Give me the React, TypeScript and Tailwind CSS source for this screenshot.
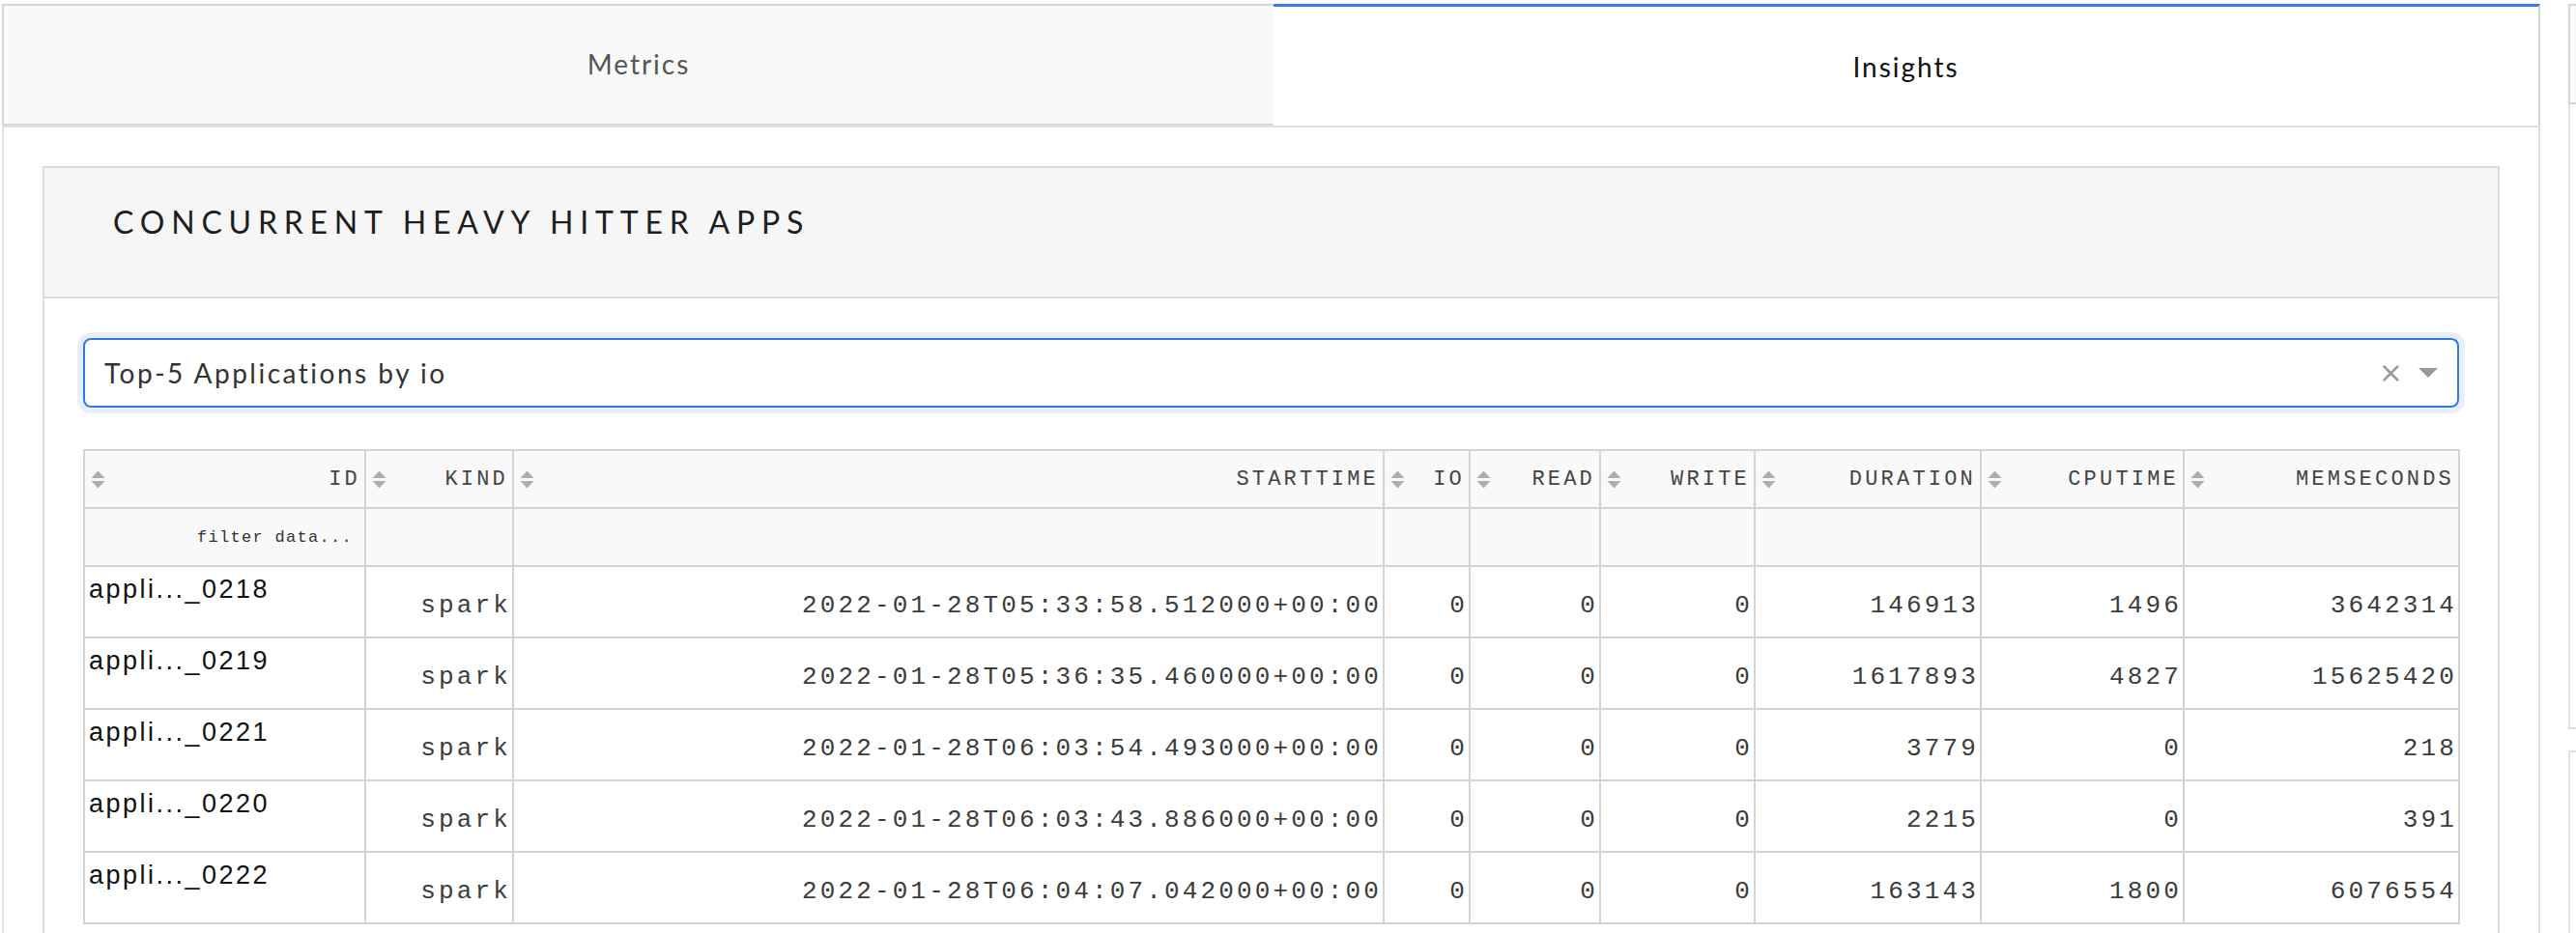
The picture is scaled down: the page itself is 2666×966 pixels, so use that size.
import React from "react";

const rows = [
  { id: "appli..._0218", kind: "spark", start: "2022-01-28T05:33:58.512000+00:00", io: 0, read: 0, write: 0, duration: 146913, cpu: 1496, mem: 3642314 },
  { id: "appli..._0219", kind: "spark", start: "2022-01-28T05:36:35.460000+00:00", io: 0, read: 0, write: 0, duration: 1617893, cpu: 4827, mem: 15625420 },
  { id: "appli..._0221", kind: "spark", start: "2022-01-28T06:03:54.493000+00:00", io: 0, read: 0, write: 0, duration: 3779, cpu: 0, mem: 218 },
  { id: "appli..._0220", kind: "spark", start: "2022-01-28T06:03:43.886000+00:00", io: 0, read: 0, write: 0, duration: 2215, cpu: 0, mem: 391 },
  { id: "appli..._0222", kind: "spark", start: "2022-01-28T06:04:07.042000+00:00", io: 0, read: 0, write: 0, duration: 163143, cpu: 1800, mem: 6076554 },
];

const columns = [
  { key: "id", label: "ID", width: 291 },
  { key: "kind", label: "KIND", width: 153 },
  { key: "start", label: "STARTTIME", width: 901 },
  { key: "io", label: "IO", width: 89 },
  { key: "read", label: "READ", width: 135 },
  { key: "write", label: "WRITE", width: 160 },
  { key: "duration", label: "DURATION", width: 234 },
  { key: "cpu", label: "CPUTIME", width: 210 },
  { key: "mem", label: "MEMSECONDS", width: 285 },
];

const SortIcon = () => (
  <svg width="15" height="19" viewBox="0 0 15 19" className="shrink-0">
    <path d="M0.5 8 L7.5 0.5 L14.5 8 Z" fill="#adadad" />
    <path d="M0.5 11 L7.5 18.5 L14.5 11 Z" fill="#adadad" />
  </svg>
);

const HeavyHitters = () => {
  return (
    <div className="border-2 border-[#dcdcdc] border-b-0 ml-[40px] mr-[40px] mt-[40px] flex-1">
      <div className="h-[135px] bg-[#f6f6f6] border-b-2 border-[#dcdcdc] pl-[71px] pt-[42px]">
        <h2 className="font-['Lato',sans-serif] text-[32px] leading-[28px] tracking-[6.8px] text-[#1e1e1e]">
          CONCURRENT HEAVY HITTER APPS
        </h2>
      </div>
      <div className="pt-[41px] px-[40px]">
        <div className="h-[72px] border-2 border-[#2f78e6] rounded-[8px] shadow-[0_0_0_6px_#e7effd] flex items-center pl-[20px] pr-[20px]">
          <span className="flex-1 font-['Lato',sans-serif] text-[28px] tracking-[2.5px] text-[#333]">
            Top-5 Applications by io
          </span>
          <span className="text-[#999] text-[30px] leading-none font-['DejaVu_Sans',sans-serif] mr-[16px]">×</span>
          <svg width="20" height="10" viewBox="0 0 20 10">
            <path d="M0 0 L20 0 L10 10 Z" fill="#999" />
          </svg>
        </div>
        <table className="mt-[43px] table-fixed border-collapse w-[2458px]">
          <colgroup>
            {columns.map((c) => (
              <col key={c.key} style={{ width: c.width }} />
            ))}
          </colgroup>
          <thead>
            <tr className="h-[60px] bg-[#f9f9f9]">
              {columns.map((c) => (
                <th key={c.key} className="border-2 border-[#d3d3d3] p-0 font-normal">
                  <div className="flex items-center justify-between pl-[6px] pr-[4px] font-['Liberation_Mono',monospace] text-[22px] tracking-[3.2px] text-[#444]">
                    <SortIcon />
                    <span>{c.label}</span>
                  </div>
                </th>
              ))}
            </tr>
            <tr className="h-[60px] bg-[#f9f9f9]">
              {columns.map((c, i) => (
                <th key={c.key} className="border-2 border-[#d3d3d3] p-0 font-normal text-right pr-[12px]">
                  {i === 0 && (
                    <span className="font-['Liberation_Mono',monospace] text-[17px] tracking-[1.3px] text-[#333]">
                      filter data...
                    </span>
                  )}
                </th>
              ))}
            </tr>
          </thead>
          <tbody>
            {rows.map((r) => (
              <tr key={r.id} className="h-[74px] bg-white">
                <td className="border-2 border-[#d3d3d3] align-top pl-[4px] pt-[3px] font-['Liberation_Sans',sans-serif] text-[27px] tracking-[2.5px] text-[#111]">
                  {r.id}
                </td>
                {columns.slice(1).map((c) => (
                  <td
                    key={c.key}
                    className="border-2 border-[#d3d3d3] text-right pr-[1px] pt-[8px] font-['Liberation_Mono',monospace] text-[26px] tracking-[3.15px] text-[#3c3c3c]"
                  >
                    {String(r[c.key as keyof typeof r])}
                  </td>
                ))}
              </tr>
            ))}
          </tbody>
        </table>
      </div>
    </div>
  );
};

const App = () => {
  return (
    <div className="w-[2666px] h-[966px] overflow-hidden bg-white flex pt-[4px] pl-[2px]">
      <div className="w-[2627px] shrink-0 flex flex-col">
        <div className="flex h-[126px] font-['Lato',sans-serif] text-[28px] tracking-[2px]">
          <div className="w-[1316px] bg-[#f9f9f9] border-2 border-r-0 border-[#d6d6d6] flex items-center justify-center text-[#555] pb-[2px]">
            Metrics
          </div>
          <div className="flex-1 bg-white border-t-[3px] border-t-[#3d7de8] border-r-2 border-r-[#d6d6d6] flex items-center justify-center text-[#111]">
            Insights
          </div>
        </div>
        <div className="flex-1 border-2 border-b-0 border-[#e0e0e0] flex flex-col">
          <HeavyHitters />
        </div>
      </div>
      <div className="ml-[29px] w-[200px] shrink-0 flex flex-col">
        <div className="h-[104px] bg-[#f9f9f9] border-2 border-r-0 border-[#d6d6d6]" />
        <div className="h-[647px] border-l-2 border-b-2 border-[#e0e0e0]" />
        <div className="mt-[22px] flex-1 border-l-2 border-t-2 border-[#e0e0e0]" />
      </div>
    </div>
  );
};

export default App;
